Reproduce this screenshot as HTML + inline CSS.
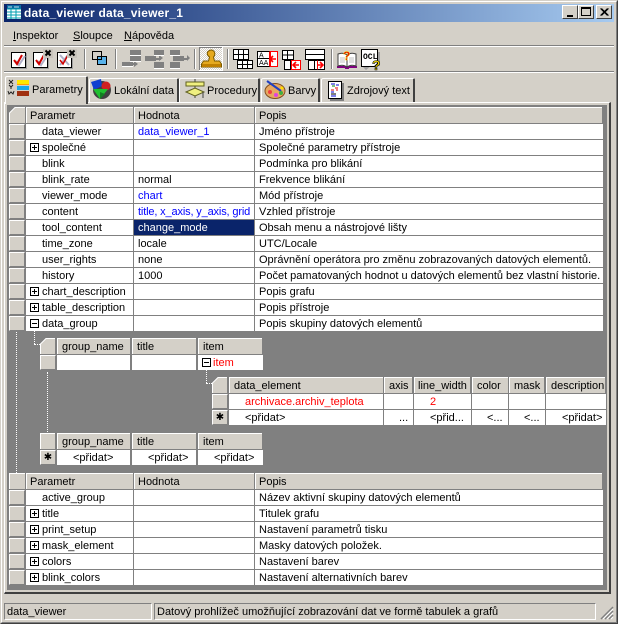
<!DOCTYPE html>
<html><head><meta charset="utf-8"><style>
html,body{margin:0;padding:0;width:618px;height:624px;overflow:hidden;background:#d4d0c8}
*{box-sizing:border-box}
body{font:11px/15px "Liberation Sans",sans-serif;color:#000;position:relative}
.a,.c,.h,.i,svg{position:absolute}
.a{white-space:nowrap}
.h{background:#d4d0c8;border-top:1px solid #fff;border-left:1px solid #fff;padding-left:3px;height:16px;line-height:17px;white-space:nowrap;overflow:hidden}
.n{padding-left:4px}
.i{background:#d4d0c8;border-top:1px solid #fff;border-left:1px solid #fff;border-right:1px solid #808080;border-bottom:1px solid #808080}
.s{text-align:center;font:10px/13px "DejaVu Sans",sans-serif}
.c{background:#fff;height:15px;line-height:17px;white-space:nowrap;overflow:hidden}
.r{position:absolute;left:0;width:618px;height:15px;line-height:17px}
.r .i{left:9px;top:0;width:16px;height:15px}
.r .k{position:absolute;left:26px;width:107px;height:15px;background:#fff;padding-left:16px}
.r .v{position:absolute;left:134px;width:120px;height:15px;background:#fff;padding-left:4px}
.r .d{position:absolute;left:255px;width:348px;height:15px;background:#fff;padding-left:4px;white-space:nowrap}
.r .b{color:#0000ff}
.p{position:absolute;left:4px;top:3px;width:9px;height:9px;border:1px solid #000;background:#fff}
.p:before{content:"";position:absolute;left:1px;top:3px;width:5px;height:1px;background:#000}
.p.m:after{content:"";position:absolute;left:3px;top:1px;width:1px;height:5px;background:#000}
.sep{position:absolute;top:49px;width:2px;height:20px;border-left:1px solid #808080;border-right:1px solid #fff}
.hl{position:absolute;left:4px;width:610px;height:2px;border-top:1px solid #808080;border-bottom:1px solid #fff}
.tab{position:absolute;background:#d4d0c8;border-top:1px solid #fff;border-left:1px solid #fff;border-right:2px solid #404040;border-radius:2px 2px 0 0}
.dv{position:absolute;border-left:1px dotted #fff}
.dh{position:absolute;border-top:1px dotted #fff}
.btn{position:absolute;top:5px;width:16px;height:14px;background:#d4d0c8;border-top:1px solid #fff;border-left:1px solid #fff;border-right:1px solid #404040;border-bottom:1px solid #404040}
</style></head><body>
<!-- window borders -->
<div class="a" style="left:0;top:0;width:618px;height:624px;border:1px solid #404040;border-top-color:#d4d0c8;border-left-color:#d4d0c8"></div>
<div class="a" style="left:1px;top:1px;width:616px;height:622px;border:1px solid #808080;border-top-color:#fff;border-left-color:#fff"></div>
<!-- title -->
<div class="a" style="left:4px;top:4px;width:610px;height:18px;background:linear-gradient(90deg,#0a246a,#a6caf0)"></div>
<svg style="left:6px;top:4px" width="16" height="16" viewBox="0 0 16 16"><rect x="1" y="1" width="14" height="14" fill="#fff"/><rect x="1" y="1" width="14" height="4" fill="#0a6aa0"/><path d="M1 5h14M1 8h14M1 11h14M1 14h14M5 5v10M10 5v10" stroke="#00a0b0" fill="none"/><path d="M2 3h4M8 3h5" stroke="#c0e0f0"/></svg>
<div class="a" style="left:24px;top:5px;color:#fff;font:bold 12px/16px 'Liberation Sans',sans-serif;letter-spacing:.2px">data_viewer data_viewer_1</div>
<div class="btn" style="left:562px"><div class="a" style="left:4px;top:9px;width:6px;height:2px;background:#000"></div></div>
<div class="btn" style="left:578px"><div class="a" style="left:2px;top:1px;width:10px;height:9px;border:1px solid #000;border-top-width:2px"></div></div>
<div class="btn" style="left:596px"><svg style="left:3px;top:2px" width="9" height="8"><path d="M0.5 0.5l7 7M1.5 0.5l7 7M7.5 0.5l-7 7M8.5 0.5l-7 7" stroke="#000"/></svg></div>
<!-- menu -->
<div class="a" style="left:13px;top:29px"><u>I</u>nspektor</div>
<div class="a" style="left:73px;top:29px"><u>S</u>loupce</div>
<div class="a" style="left:124px;top:29px"><u>N</u>ápověda</div>
<div class="hl" style="top:45px"></div>
<!-- toolbar -->
<svg style="left:0;top:47px" width="400" height="24" viewBox="0 47 400 24">
<defs>
<g id="ck"><rect x="1" y="1" width="15" height="16" fill="#a0a0a0"/><rect x="0.5" y="0.5" width="14" height="15" fill="#fff" stroke="#000"/><path d="M4 8l3 4 6-9" stroke="#b0b0c8" stroke-width="2" fill="none" transform="translate(1 1)"/><path d="M3 8l3 4 5-9" stroke="#d00000" stroke-width="2" fill="none"/></g>
<g id="mx"><rect x="0" y="0" width="10" height="9" fill="#c8c4bc"/><path d="M2.5 1.5l5 5M7.5 1.5l-5 5" stroke="#000" stroke-width="2"/></g>
<g id="tb"><path d="M0.5 0.5h15v10h-15zM0.5 5.5h15M5.5 .5v10M10.5 .5v10" fill="#fff" stroke="#000"/></g>
</defs>
<use href="#ck" x="11" y="52"/>
<use href="#ck" x="33" y="52"/><use href="#mx" x="43" y="49"/>
<g transform="translate(57 52)"><rect x="1" y="1" width="15" height="16" fill="#a0a0a0"/><rect x="0.5" y="0.5" width="14" height="15" fill="#fff" stroke="#000"/><path d="M3 3l9 10M11 3l-8 10" stroke="#b0b0c8" stroke-width="2"/><path d="M3 8l3 4 5-9" stroke="#d00000" stroke-width="1.500" fill="none"/></g><use href="#mx" x="67" y="49"/>
<rect x="97.5" y="56.5" width="9" height="8" fill="#59b2ea" stroke="#000"/><rect x="92.5" y="51.5" width="9" height="8" fill="none" stroke="#000"/>
<!-- grey icons -->
<g fill="#808080"><rect x="130" y="50" width="11" height="5"/><rect x="130" y="56" width="11" height="5"/><rect x="122" y="62" width="11" height="4"/><path d="M133 63h4v2h-4z"/><path d="M134 61l4 3-4 3z"/>
<rect x="154" y="50" width="10" height="5"/><rect x="154" y="62" width="10" height="6"/><rect x="145" y="56" width="11" height="5"/><path d="M156 58h5v2h-5z"/><path d="M159 55l4 3-4 3z"/>
<rect x="170" y="50" width="10" height="5"/><rect x="170" y="62" width="10" height="6"/><rect x="173" y="56" width="11" height="5"/><path d="M184 58h4v2h-4z"/><path d="M187 55l3 3-3 3z"/></g>
<g stroke="#fff" fill="none"><path d="M130 55.500h11M130 61.500h11M154 55.500h10M154 68.500h10M170 55.500h10M170 68.500h10M122 66.500h11"/></g>
<!-- stamp button -->
<defs><pattern id="ch" width="2" height="2" patternUnits="userSpaceOnUse" x="0" y="0"><rect width="2" height="2" fill="#fff"/><rect width="1" height="1" fill="#d4d0c8"/><rect x="1" y="1" width="1" height="1" fill="#d4d0c8"/></pattern></defs>
<rect x="199" y="47" width="24" height="24" fill="url(#ch)"/>
<path d="M199.5 70V47.5H223" stroke="#808080" fill="none"/><path d="M199.5 70.5H222.5V47" stroke="#fff" fill="none"/>
<path d="M208 52q4-4 7 0q1 3-1 5l1 4h5l2 3v3h-20v-3l2-3h5l1-4q-3-2-2-5z" fill="#e5a91e" stroke="#7a5a00" transform="translate(-0.5 0)"/>
<rect x="202" y="64" width="19" height="3" fill="#c08000"/>
<!-- table icons -->
<use href="#tb" x="233" y="49"/>
<path d="M237.500 60.500h15v8h-15zM242.500 60.500v8M247.500 60.500v8M237.500 64.500h15" fill="#fff" stroke="#000"/>
<g transform="translate(257 51)"><rect x="0.5" y="0.5" width="20" height="15" fill="#fff" stroke="#000"/><path d="M.5 7.500h12" stroke="#000"/><rect x="13.500" y=".5" width="7" height="15" fill="#fff" stroke="#f00"/><path d="M12.500 .5v15" stroke="#f00"/><path d="M14 8h5M16 5l-3 3 3 3" stroke="#f00" stroke-width="1.600" fill="none"/><text x="2" y="6.500" font-size="7" font-family="Liberation Sans">A</text><text x="2" y="14" font-size="7" font-family="Liberation Sans">AA</text></g>
<g transform="translate(282 50)"><path d="M.5 .5h11v9h-11zM.5 5h11M5.500 .5v9" fill="#fff" stroke="#000"/><path d="M2.500 10.500h16v9h-16zM8.500 10.500v9" fill="#fff" stroke="#000"/><rect x="9.500" y="10.500" width="9" height="9" fill="#fff" stroke="#f00"/><path d="M11 15h6M14 12l-3 3 3 3" stroke="#f00" stroke-width="1.600" fill="none"/></g>
<g transform="translate(305 49)"><path d="M.5 .5h19v10h-19zM.5 5.500h19" fill="#fff" stroke="#000"/><path d="M3.500 11.500h16v9h-16zM9.500 11.500v9" fill="#fff" stroke="#000"/><path d="M12.500 11.500v9" stroke="#f00"/><path d="M12 16h6M15 13l3 3-3 3" stroke="#f00" stroke-width="1.600" fill="none"/></g>
<!-- help -->
<g transform="translate(337 50)"><path d="M0 16h20v2h-8v1h-4v-1h-8z" fill="#800080"/><path d="M1 4q5-2 9 1v12q-4-3-9-1zM19 4q-5-2-9 1v12q4-3 9-1z" fill="#fff" stroke="#404040"/><path d="M3 8h5M3 10h5M3 12h5M12 8h5M12 10h5M12 12h5" stroke="#c0c0c0"/><text x="6" y="10" font-size="12" font-weight="bold" fill="#e00000" stroke="#ffe000" stroke-width=".4" font-family="Liberation Sans">?</text></g>
<g transform="translate(361 49)"><path d="M2 3h17v14h-9l-5 4-3-3z" fill="#a0a0a0"/><path d="M.5 .5h16v14l-3 3h-13z" fill="#fff" stroke="#000"/><text x="2" y="10" font-size="8" font-family="Liberation Mono" font-weight="bold">OCL</text><text x="11" y="21" font-size="14" font-weight="bold" fill="#ffe000" stroke="#000" stroke-width=".6" font-family="Liberation Sans">?</text></g>
</svg>
<div class="sep" style="left:84px"></div><div class="sep" style="left:115px"></div><div class="sep" style="left:194px"></div><div class="sep" style="left:227px"></div><div class="sep" style="left:331px"></div>
<div class="hl" style="top:71px"></div>
<!-- panel -->
<div class="a" style="left:4px;top:102px;width:607px;height:492px;border-top:1px solid #fff;border-left:1px solid #fff;border-right:2px solid #404040;border-bottom:2px solid #404040"></div>
<!-- tabs -->
<div class="tab" style="left:5px;top:76px;width:83px;height:28px;z-index:2"></div>
<div class="tab" style="left:89px;top:78px;width:90px;height:24px"></div>
<div class="tab" style="left:179px;top:78px;width:81px;height:24px"></div>
<div class="tab" style="left:261px;top:78px;width:59px;height:24px"></div>
<div class="tab" style="left:321px;top:78px;width:94px;height:24px"></div>
<div class="a" style="left:32px;top:83px;z-index:3">Parametry</div>
<div class="a" style="left:114px;top:84px">Lokální data</div>
<div class="a" style="left:207px;top:84px">Procedury</div>
<div class="a" style="left:288px;top:84px">Barvy</div>
<div class="a" style="left:347px;top:84px">Zdrojový text</div>
<svg style="left:0;top:76px;z-index:3" width="420" height="26" viewBox="0 76 420 26">
<path d="M9 80l4 4M13 80l-4 4M9 85l2 2 2-2M11 87v2M8 91l1 3 2-2 2 2 1-3" stroke="#202020" fill="none"/>
<rect x="17" y="80" width="12" height="4" fill="#ffe800"/><rect x="17" y="84" width="12" height="1" fill="#ffa000"/><rect x="17" y="86" width="12" height="4" fill="#18a8e8"/><rect x="17" y="91" width="12" height="5" fill="#a03010"/>
<!-- sphere -->
<circle cx="101" cy="90" r="9" fill="#404040" transform="translate(1 0)"/>
<path d="M91 82l10-3 1 7-8 4z" fill="#1040d0"/><circle cx="106" cy="86" r="4.500" fill="#d02020"/><path d="M93 89h15l-8 10z" fill="#20c030"/><path d="M100 99l5-5-5-2z" fill="#108020"/>
<!-- proc -->
<path d="M195 79v19" stroke="#404040"/><rect x="186" y="82" width="18" height="4" fill="#f0f080" stroke="#606020"/><path d="M186 92l9-4 9 4-9 4z" fill="#f0f080" stroke="#606020"/><path d="M203 92v6" stroke="#404040"/>
<!-- palette -->
<ellipse cx="275" cy="91" rx="10" ry="7.500" fill="#e8a860" stroke="#805020"/><path d="M267 81l14 10" stroke="#2040c0" stroke-width="2"/><circle cx="270" cy="92" r="2" fill="#f04040"/><circle cx="276" cy="95" r="2" fill="#e040e0"/><circle cx="281" cy="93" r="2" fill="#40b040"/><circle cx="282" cy="88" r="1.500" fill="#ffe000"/>
<!-- doc -->
<rect x="330" y="83" width="14" height="18" fill="#808080"/><rect x="328.500" y="81.500" width="13" height="17" fill="#fff" stroke="#000"/>
<path d="M331 84h4M336 85h3" stroke="#0000d0"/><path d="M332 86h3" stroke="#008000"/><path d="M335 88h3" stroke="#e00000"/><path d="M331 90h3M336 90h2" stroke="#e00000"/><path d="M331 92h3" stroke="#0000d0"/><path d="M331 94h5" stroke="#000"/><path d="M331 96h5" stroke="#0000d0"/>
</svg>
<!-- grid bg -->
<div class="a" style="left:7px;top:105px;width:600px;height:485px;background:#808080"></div>
<!-- header 1 -->
<svg style="left:9px;top:107px" width="16" height="16"><path d="M0 6L6 0H16V16H0z" fill="#d4d0c8"/><path d="M.5 16V6L6 .5H16" stroke="#fff" fill="none"/></svg>
<div class="h" style="left:26px;top:107px;width:107px">Parametr</div>
<div class="h" style="left:134px;top:107px;width:120px">Hodnota</div>
<div class="h" style="left:255px;top:107px;width:347px">Popis</div>

<div class="r" style="top:124px"><div class="i"></div><div class="k">data_viewer</div><div class="v b">data_viewer_1</div><div class="d">Jméno přístroje</div></div>
<div class="r" style="top:140px"><div class="i"></div><div class="k"><span class="p m"></span>společné</div><div class="v"></div><div class="d">Společné parametry přístroje</div></div>
<div class="r" style="top:156px"><div class="i"></div><div class="k">blink</div><div class="v"></div><div class="d">Podmínka pro blikání</div></div>
<div class="r" style="top:172px"><div class="i"></div><div class="k">blink_rate</div><div class="v">normal</div><div class="d">Frekvence blikání</div></div>
<div class="r" style="top:188px"><div class="i"></div><div class="k">viewer_mode</div><div class="v b">chart</div><div class="d">Mód přístroje</div></div>
<div class="r" style="top:204px"><div class="i"></div><div class="k">content</div><div class="v b" style="letter-spacing:-.15px">title, x_axis, y_axis, grid</div><div class="d">Vzhled přístroje</div></div>
<div class="r" style="top:220px"><div class="i"></div><div class="k">tool_content</div><div class="v" style="background:#0a246a;color:#fff">change_mode</div><div class="d">Obsah menu a nástrojové lišty</div></div>
<div class="r" style="top:236px"><div class="i"></div><div class="k">time_zone</div><div class="v">locale</div><div class="d">UTC/Locale</div></div>
<div class="r" style="top:252px"><div class="i"></div><div class="k">user_rights</div><div class="v">none</div><div class="d">Oprávnění operátora pro změnu zobrazovaných datových elementů.</div></div>
<div class="r" style="top:268px"><div class="i"></div><div class="k">history</div><div class="v">1000</div><div class="d">Počet pamatovaných hodnot u datových elementů bez vlastní historie.</div></div>
<div class="r" style="top:284px"><div class="i"></div><div class="k"><span class="p m"></span>chart_description</div><div class="v"></div><div class="d">Popis grafu</div></div>
<div class="r" style="top:300px"><div class="i"></div><div class="k"><span class="p m"></span>table_description</div><div class="v"></div><div class="d">Popis přístroje</div></div>
<div class="r" style="top:316px"><div class="i"></div><div class="k"><span class="p"></span>data_group</div><div class="v"></div><div class="d">Popis skupiny datových elementů</div></div>

<!-- dotted -->
<div class="dv" style="left:16px;top:332px;height:141px"></div>
<div class="dv" style="left:34px;top:331px;height:13px"></div>
<div class="dh" style="left:34px;top:344px;width:6px"></div>
<div class="dv" style="left:47px;top:372px;height:60px"></div>
<div class="dv" style="left:206px;top:368px;height:15px"></div>
<div class="dh" style="left:206px;top:383px;width:6px"></div>

<!-- nested grid 1 -->
<svg style="left:40px;top:338px" width="15" height="16"><path d="M0 6L6 0H15V16H0z" fill="#d4d0c8"/><path d="M.5 16V6L6 .5H15" stroke="#fff" fill="none"/></svg>
<div class="h n" style="left:57px;top:338px;width:73px">group_name</div>
<div class="h n" style="left:132px;top:338px;width:64px">title</div>
<div class="h n" style="left:198px;top:338px;width:64px">item</div>
<div class="i" style="left:40px;top:355px;width:16px;height:15px"></div>
<div class="c" style="left:57px;top:355px;width:73px"></div>
<div class="c" style="left:132px;top:355px;width:64px"></div>
<div class="c" style="left:198px;top:355px;width:65px;padding-left:15px;color:#f00"><span class="p" style="top:3px"></span>item</div>

<!-- nested grid 2 -->
<svg style="left:212px;top:377px" width="15" height="16"><path d="M0 6L6 0H15V16H0z" fill="#d4d0c8"/><path d="M.5 16V6L6 .5H15" stroke="#fff" fill="none"/></svg>
<div class="h n" style="left:229px;top:377px;width:154px">data_element</div>
<div class="h n" style="left:384px;top:377px;width:28px">axis</div>
<div class="h" style="left:414px;top:377px;width:56px">line_width</div>
<div class="h n" style="left:472px;top:377px;width:36px">color</div>
<div class="h n" style="left:509px;top:377px;width:35px">mask</div>
<div class="h n" style="left:546px;top:377px;width:59px">description</div>
<div class="i" style="left:212px;top:394px;width:16px;height:15px"></div>
<div class="c" style="left:229px;top:394px;width:154px;padding-left:16px;color:#f00">archivace.archiv_teplota</div>
<div class="c" style="left:384px;top:394px;width:29px"></div>
<div class="c" style="left:414px;top:394px;width:57px;padding-left:16px;color:#f00">2</div>
<div class="c" style="left:472px;top:394px;width:36px"></div>
<div class="c" style="left:509px;top:394px;width:36px"></div>
<div class="c" style="left:546px;top:394px;width:60px"></div>
<div class="i s" style="left:212px;top:410px;width:16px;height:15px">✱</div>
<div class="c" style="left:229px;top:410px;width:154px;padding-left:16px">&lt;přidat&gt;</div>
<div class="c" style="left:384px;top:410px;width:29px;padding-left:15px">...</div>
<div class="c" style="left:414px;top:410px;width:57px;padding-left:16px">&lt;přid...</div>
<div class="c" style="left:472px;top:410px;width:36px;padding-left:15px">&lt;...</div>
<div class="c" style="left:509px;top:410px;width:36px;padding-left:15px">&lt;...</div>
<div class="c" style="left:546px;top:410px;width:60px;padding-left:16px">&lt;přidat&gt;</div>

<!-- nested grid 3 -->
<div class="h" style="left:40px;top:433px;width:15px"></div>
<div class="h n" style="left:57px;top:433px;width:73px">group_name</div>
<div class="h n" style="left:132px;top:433px;width:64px">title</div>
<div class="h n" style="left:198px;top:433px;width:64px">item</div>
<div class="i s" style="left:40px;top:450px;width:16px;height:15px">✱</div>
<div class="c" style="left:57px;top:450px;width:73px;padding-left:16px">&lt;přidat&gt;</div>
<div class="c" style="left:132px;top:450px;width:64px;padding-left:16px">&lt;přidat&gt;</div>
<div class="c" style="left:198px;top:450px;width:65px;padding-left:16px">&lt;přidat&gt;</div>

<!-- header 2 -->
<div class="h" style="left:9px;top:473px;width:16px"></div>
<div class="h" style="left:26px;top:473px;width:107px">Parametr</div>
<div class="h" style="left:134px;top:473px;width:120px">Hodnota</div>
<div class="h" style="left:255px;top:473px;width:347px">Popis</div>
<div class="r" style="top:490px"><div class="i"></div><div class="k">active_group</div><div class="v"></div><div class="d">Název aktivní skupiny datových elementů</div></div>
<div class="r" style="top:506px"><div class="i"></div><div class="k"><span class="p m"></span>title</div><div class="v"></div><div class="d">Titulek grafu</div></div>
<div class="r" style="top:522px"><div class="i"></div><div class="k"><span class="p m"></span>print_setup</div><div class="v"></div><div class="d">Nastavení parametrů tisku</div></div>
<div class="r" style="top:538px"><div class="i"></div><div class="k"><span class="p m"></span>mask_element</div><div class="v"></div><div class="d">Masky datových položek.</div></div>
<div class="r" style="top:554px"><div class="i"></div><div class="k"><span class="p m"></span>colors</div><div class="v"></div><div class="d">Nastavení barev</div></div>
<div class="r" style="top:570px"><div class="i"></div><div class="k"><span class="p m"></span>blink_colors</div><div class="v"></div><div class="d">Nastavení alternativních barev</div></div>

<!-- status -->
<div class="a" style="left:4px;top:603px;width:148px;height:17px;border:1px solid;border-color:#808080 #fff #fff #808080;padding-left:2px;line-height:17px">data_viewer</div>
<div class="a" style="left:154px;top:603px;width:442px;height:17px;border:1px solid;border-color:#808080 #fff #fff #808080;padding-left:2px;line-height:17px">Datový prohlížeč umožňující zobrazování dat ve formě tabulek a grafů</div>
<svg style="left:600px;top:606px" width="14" height="14"><path d="M13 1L1 13M13 5L5 13M13 9L9 13" stroke="#808080" stroke-width="1.500"/><path d="M13 3L3 13M13 7L7 13M13 11L11 13" stroke="#fff"/></svg>
</body></html>
